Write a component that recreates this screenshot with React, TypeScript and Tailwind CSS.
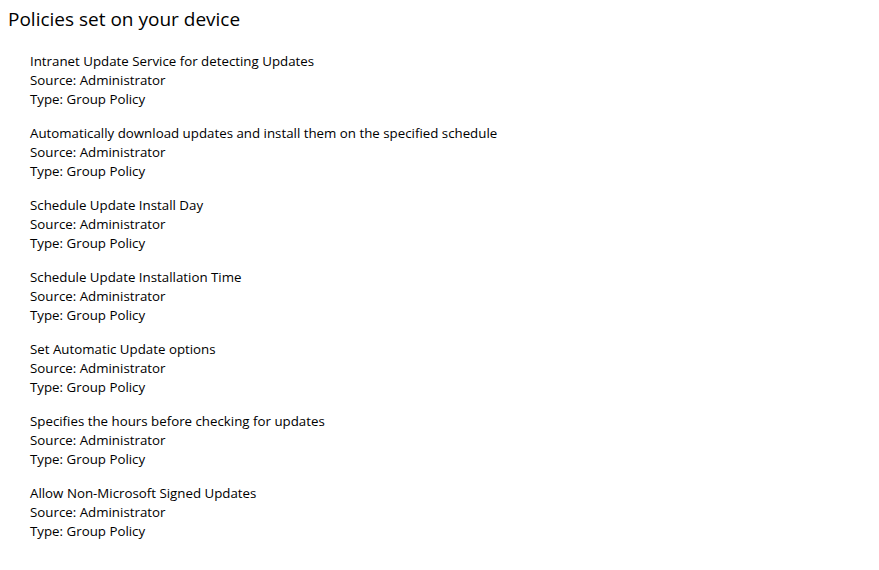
import React from "react";

const items = [
  "Intranet Update Service for detecting Updates",
  "Automatically download updates and install them on the specified schedule",
  "Schedule Update Install Day",
  "Schedule Update Installation Time",
  "Set Automatic Update options",
  "Specifies the hours before checking for updates",
  "Allow Non-Microsoft Signed Updates",
];

export default function App() {
  return (
    <div className="w-[879px] h-[570px] bg-white text-black font-['Open_Sans',sans-serif]">
      <div className="pl-2 pt-[5px] h-[52px]">
        <h1 className="text-[19px] leading-[28px] font-normal">Policies set on your device</h1>
      </div>
      <div className="pl-[30px] flex flex-col gap-[15px]">
        {items.map((t) => (
          <div key={t} className="text-[13.3px] leading-[19px]">
            <div>{t}</div>
            <div>Source: Administrator</div>
            <div>Type: Group Policy</div>
          </div>
        ))}
      </div>
    </div>
  );
}
